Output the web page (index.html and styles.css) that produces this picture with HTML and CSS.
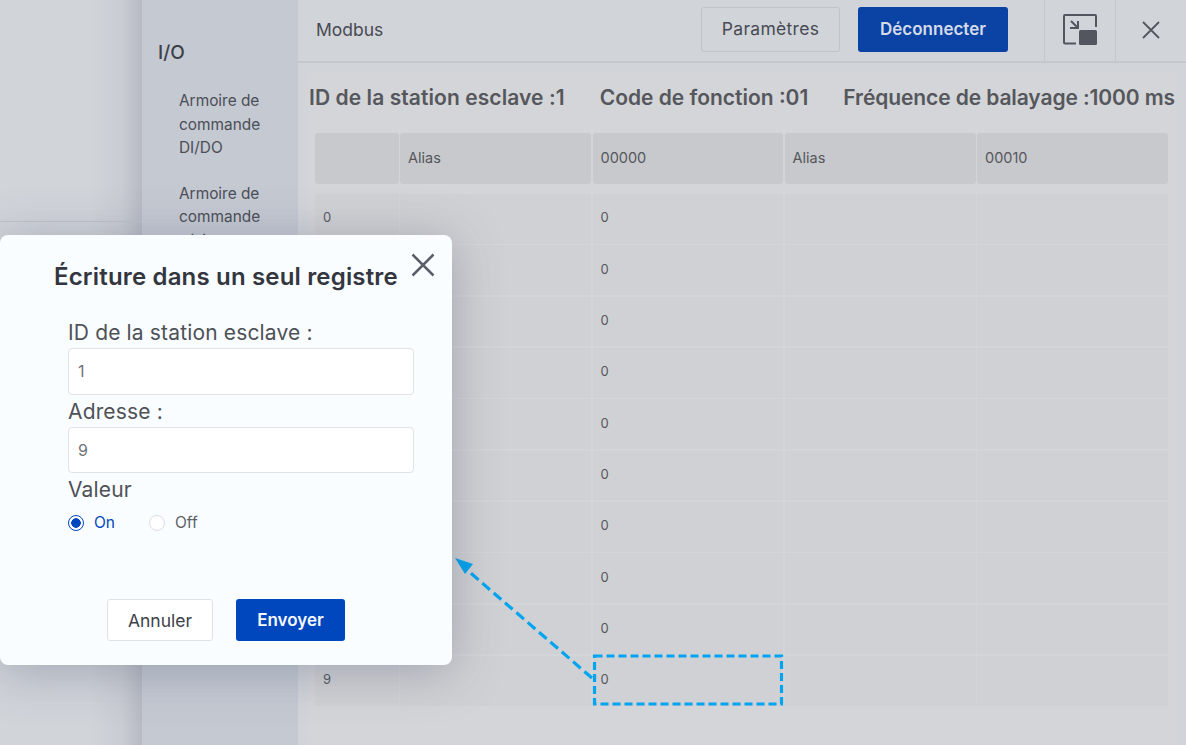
FILE: index.html
```html
<!DOCTYPE html>
<html lang="en">
<head>
    <meta charset="UTF-8">
    <title>Modbus</title>
    <link rel="stylesheet" href="styles.css">
</head>
<body>
    <div class="page">
        <div class="backdrop"><div class="backdrop-top"></div></div>

        <aside class="sidebar">
            <h2 class="side-title">I/O</h2>
            <a class="side-item">Armoire de commande DI/DO</a>
            <a class="side-item">Armoire de commande série</a>
        </aside>

        <main class="main">
            <header class="topbar">
                <span class="topbar-title">Modbus</span>
                <div class="topbar-actions">
                    <button class="btn btn-settings">Paramètres</button>
                    <button class="btn btn-disconnect">Déconnecter</button>
                </div>
                <div class="topbar-icon icon-shrink">
                    <svg width="34" height="31" viewBox="0 0 34 31" fill="none">
                        <path d="M13 29.500H2a1 1 0 0 1-1-1V2a1 1 0 0 1 1-1h30a1 1 0 0 1 1 1v11" stroke="#53565f" stroke-width="2"/>
                        <rect x="16" y="16" width="18" height="15" rx="1.500" fill="#53565f"/>
                        <path d="M8 7l7 7M15 7v7H7" stroke="#53565f" stroke-width="2"/>
                    </svg>
                </div>
                <div class="topbar-icon icon-close">
                    <svg width="20" height="20" viewBox="0 0 20 20" fill="none">
                        <path d="M2 2l16 16M18 2L2 18" stroke="#53565f" stroke-width="1.800"/>
                    </svg>
                </div>
            </header>

            <section class="panel">
                <div class="stats">
                    <span class="stat-station">ID de la station esclave :1</span>
                    <span>Code de fonction :01</span>
                    <span class="stat-scan">Fréquence de balayage :1000 ms</span>
                </div>
                <div class="table">
                    <div class="table-head">
                        <div class="cell"></div>
                        <div class="cell">Alias</div>
                        <div class="cell">00000</div>
                        <div class="cell">Alias</div>
                        <div class="cell">00010</div>
                    </div>
                    <div class="table-body">
                        <div class="cell">0</div><div class="cell"></div><div class="cell">0</div><div class="cell"></div><div class="cell"></div>
                        <div class="cell"></div><div class="cell"></div><div class="cell">0</div><div class="cell"></div><div class="cell"></div>
                        <div class="cell"></div><div class="cell"></div><div class="cell">0</div><div class="cell"></div><div class="cell"></div>
                        <div class="cell"></div><div class="cell"></div><div class="cell">0</div><div class="cell"></div><div class="cell"></div>
                        <div class="cell"></div><div class="cell"></div><div class="cell">0</div><div class="cell"></div><div class="cell"></div>
                        <div class="cell"></div><div class="cell"></div><div class="cell">0</div><div class="cell"></div><div class="cell"></div>
                        <div class="cell"></div><div class="cell"></div><div class="cell">0</div><div class="cell"></div><div class="cell"></div>
                        <div class="cell"></div><div class="cell"></div><div class="cell">0</div><div class="cell"></div><div class="cell"></div>
                        <div class="cell"></div><div class="cell"></div><div class="cell">0</div><div class="cell"></div><div class="cell"></div>
                        <div class="cell">9</div><div class="cell"></div><div class="cell">0</div><div class="cell"></div><div class="cell"></div>
                    </div>
                </div>
            </section>
        </main>

        <!-- callout drawn over the table -->
        <svg class="callout" width="1186" height="745" viewBox="0 0 1186 745" fill="none">
            <rect x="594.500" y="656" width="187" height="48" stroke="#00a4ef" stroke-width="3.200" stroke-dasharray="8 4"/>
            <path d="M592 678L466 569" stroke="#00a4ef" stroke-width="3.200" stroke-dasharray="10 5"/>
            <path d="M455 558l18 6-8 10z" fill="#00a4ef"/>
        </svg>

        <div class="dialog">
            <button class="dialog-close">
                <svg width="24" height="24" viewBox="0 0 24 24" fill="none">
                    <path d="M1.500 1.500l21 21M22.500 1.500l-21 21" stroke="#5a5e68" stroke-width="2.500"/>
                </svg>
            </button>
            <h3 class="dialog-title">Écriture dans un seul registre</h3>
            <form class="form">
                <label class="form-label">ID de la station esclave :</label>
                <div class="form-input">1</div>
                <label class="form-label">Adresse :</label>
                <div class="form-input">9</div>
                <label class="form-label">Valeur</label>
                <div class="radios">
                    <span class="radio radio-on"></span>
                    <span class="radio-text radio-text-on">On</span>
                    <span class="radio"></span>
                    <span class="radio-text">Off</span>
                </div>
            </form>
            <div class="dialog-actions">
                <button class="btn btn-cancel">Annuler</button>
                <button class="btn btn-send">Envoyer</button>
            </div>
        </div>
    </div>
</body>
</html>
```

FILE: styles.css
```css
* {
    box-sizing: border-box;
}

body {
    margin: 0;
    font-family: Inter, "Liberation Sans", sans-serif;
    color: #4b4e56;
    overflow: hidden;
}

.page {
    display: flex;
    position: relative;
    width: 1186px;
    height: 745px;
    overflow: hidden;
    background-color: #d1d4d9;
}

/* left side, what is behind the drawer */
.backdrop {
    width: 142px;
    flex-shrink: 0;
    background: linear-gradient(to right, #d1d4d9 90px, #c9ccd2 122px, #b7bac3 142px);
}

.backdrop-top {
    height: 222px;
    border-bottom: 1px solid #bfc3ca;
}

.sidebar {
    width: 156px;
    flex-shrink: 0;
    padding: 42px 16px 0;
    background-color: #c5c9d2;
}

.side-title {
    margin: 0 0 25px;
    font-size: 19px;
    line-height: 22px;
    font-weight: 500;
    color: #3d4048;
}

.side-item {
    display: block;
    margin: 0 0 22px 21px;
    font-size: 15.400px;
    line-height: 23.500px;
    color: #4b4e56;
}

.main {
    flex: 1;
    display: flex;
    flex-direction: column;
}

.topbar {
    display: flex;
    align-items: stretch;
    height: 63px;
    border-bottom: 2px solid #c4c8cd;
}

.topbar-title {
    flex: 1;
    align-self: center;
    padding-left: 18px;
    padding-bottom: 3px;
    font-size: 17.500px;
    color: #474a52;
}

.topbar-actions {
    display: flex;
    gap: 18px;
    align-items: flex-start;
    padding-top: 7px;
    padding-right: 36px;
}

.btn {
    font-family: inherit;
    font-size: 17.500px;
    border-radius: 3px;
    cursor: pointer;
}

.btn-settings {
    width: 139px;
    height: 45px;
    padding-bottom: 3px;
    background-color: transparent;
    border: 1px solid #c0c4c9;
    color: #474a52;
    letter-spacing: 0.300px;
}

.btn-disconnect {
    width: 150px;
    height: 45px;
    padding-bottom: 3px;
    background-color: #0a43a3;
    border: none;
    color: #d4dbe8;
    font-size: 17px;
    font-weight: 600;
}

.topbar-icon {
    display: flex;
    align-items: center;
    justify-content: center;
    border-left: 1px solid #c4c8cd;
    padding-bottom: 2px;
}

.icon-shrink,
.icon-close {
    width: 71px;
}

.panel {
    flex: 1;
    margin: 10px 10px 2px 11px;
    background-color: #d4d5d8;
}

.stats {
    display: flex;
    gap: 35px;
    height: 60px;
    align-items: center;
    padding-bottom: 12px;
    font-size: 21px;
    font-weight: 600;
    white-space: nowrap;
    color: #55575c;
}

.stat-station {
    letter-spacing: 0.080px;
}

.stat-scan {
    letter-spacing: -0.100px;
}

.table {
    padding: 0 8px 0 6px;
}

.table-head,
.table-body {
    display: grid;
    grid-template-columns: 83.500px 191px 190.500px 191px 191px;
    gap: 1.500px;
}

.table-head {
    height: 51px;
    margin-bottom: 10px;
}

.table-body {
    grid-auto-rows: 49.820px;
}

.cell {
    display: flex;
    align-items: center;
    padding-left: 8px;
    padding-bottom: 3px;
    font-size: 13px;
    color: #55575c;
    background-color: #d0d1d4;
}

.table-head .cell {
    padding-bottom: 2px;
    font-size: 14.500px;
    background-color: #c8c9cc;
    border-radius: 3px;
}

.callout {
    position: absolute;
    top: 0;
    left: 0;
}

.dialog {
    position: absolute;
    top: 235px;
    left: 0;
    width: 452px;
    height: 430px;
    padding: 28px 38px 0 54px;
    background-color: #f9fdff;
    border-radius: 8px;
    box-shadow: 0 6px 50px rgba(70, 80, 110, 0.35);
}

.dialog-close {
    position: absolute;
    top: 18px;
    right: 17px;
    padding: 0;
    border: none;
    background: none;
}

.dialog-title {
    margin: 0 0 26px;
    font-size: 24px;
    line-height: 28px;
    font-weight: 600;
    letter-spacing: 0.170px;
    white-space: nowrap;
    color: #33363f;
}

.form {
    display: flex;
    flex-direction: column;
    margin-left: 14px;
}

.form-label {
    font-size: 21px;
    line-height: 31px;
    letter-spacing: 0.150px;
    color: #4f5157;
}

.form-input {
    display: flex;
    align-items: center;
    width: 346px;
    height: 46.500px;
    margin-bottom: 1px;
    padding-left: 9px;
    font-size: 16px;
    color: #6f7278;
    background-color: #fff;
    border: 1px solid #e0e3e8;
    border-radius: 4px;
}

.radios {
    display: flex;
    align-items: center;
    margin-top: 8px;
}

.radio {
    width: 16px;
    height: 16px;
    margin-right: 10px;
    border: 1px solid #dcdfe4;
    border-radius: 50%;
    background-color: #fff;
}

.radio-on {
    border: 1.500px solid #0046bd;
    background: radial-gradient(circle, #0046bd 0 4.500px, #fff 5px);
}

.radio-text {
    font-size: 15.500px;
    color: #5c5f66;
}

.radio-text-on {
    width: 55px;
    color: #0046bd;
}

.dialog-actions {
    position: absolute;
    top: 364px;
    left: 107px;
    display: flex;
    gap: 23px;
}

.btn-cancel {
    width: 106px;
    height: 42px;
    background-color: #fff;
    border: 1px solid #dfe2e7;
    color: #3e4149;
}

.btn-send {
    width: 109px;
    height: 42px;
    background-color: #0046bd;
    border: none;
    color: #f5f8fd;
    font-size: 17px;
    font-weight: 600;
}
```
